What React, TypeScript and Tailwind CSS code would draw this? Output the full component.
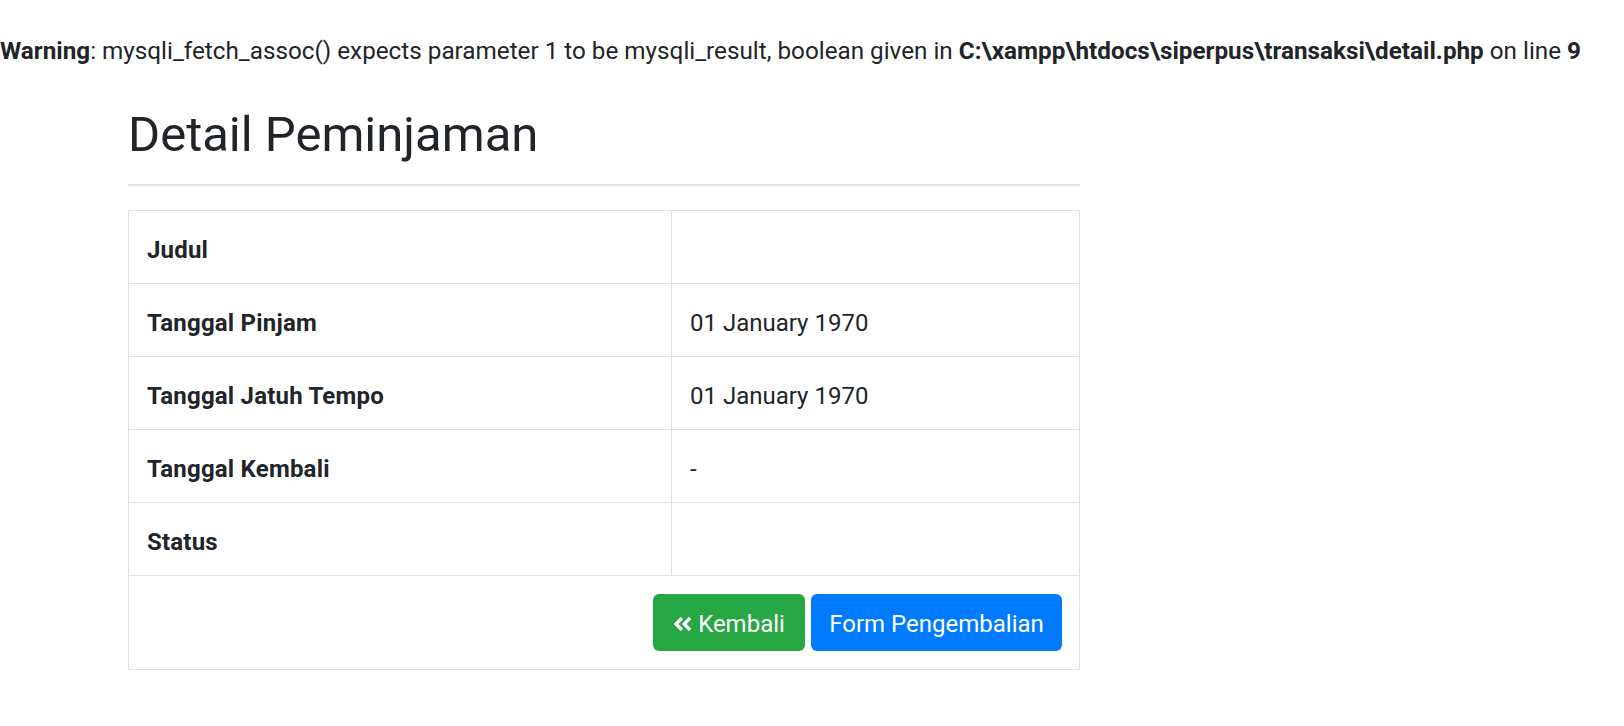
import React from "react";
import { FaAngleDoubleLeft } from "react-icons/fa";

const rows: { label: string; value: string }[] = [
  { label: "Judul", value: "" },
  { label: "Tanggal Pinjam", value: "01 January 1970" },
  { label: "Tanggal Jatuh Tempo", value: "01 January 1970" },
  { label: "Tanggal Kembali", value: "-" },
  { label: "Status", value: "" },
];

export default function App() {
  return (
    <div
      className="min-h-[726px] w-[1624px] bg-white text-[#212529]"
      style={{ fontFamily: "Roboto, 'Noto Sans', sans-serif" }}
    >
      <div className="pt-[33px] text-[24.25px] leading-[36px] whitespace-nowrap">
        <b className="font-bold">Warning</b>: mysqli_fetch_assoc() expects parameter 1 to be mysqli_result, boolean given in{" "}
        <b className="font-bold">C:\xampp\htdocs\siperpus\transaksi\detail.php</b> on line <b className="font-bold">9</b>
      </div>

      <div className="ml-[128px] w-[952px]">
        <h2 className="mt-[37px] text-[49px] leading-[58px] font-normal">Detail Peminjaman</h2>
        <div className="mt-[20px] h-[2px] bg-[#e5e5e5]" />

        <div className="mt-[24px] border border-[#dee2e6] text-[24px] leading-[36px]">
          {rows.map((r, i) => (
            <div key={r.label} className={`flex ${i === 0 ? "h-[72px]" : "h-[73px] border-t border-[#dee2e6]"}`}>
              <div className="flex w-[543px] items-center border-r border-[#dee2e6] px-[18px] pt-[5px] font-bold tracking-[0.2px]">
                {r.label}
              </div>
              <div className="flex flex-1 items-center px-[18px] pt-[5px]">{r.value}</div>
            </div>
          ))}
          <div className="flex h-[94px] items-center justify-end gap-[6px] border-t border-[#dee2e6] px-[17px]">
            <button className="flex h-[57px] w-[152px] items-center justify-center gap-[6px] rounded-[6px] bg-[#28a745] pt-[2px] text-white">
              <FaAngleDoubleLeft className="h-[22px] w-[19px]" />
              <span>Kembali</span>
            </button>
            <button className="flex h-[57px] w-[251px] items-center justify-center rounded-[6px] bg-[#007bff] pt-[2px] text-white">
              Form Pengembalian
            </button>
          </div>
        </div>
      </div>
    </div>
  );
}
